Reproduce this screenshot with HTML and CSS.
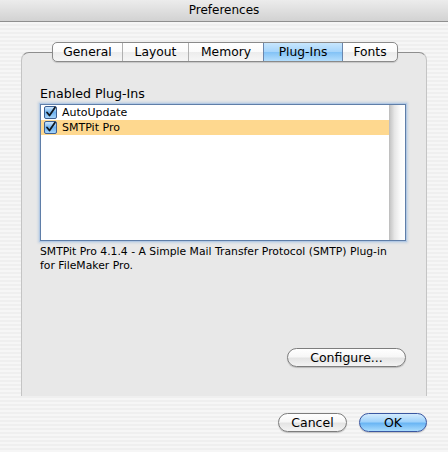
FILE: index.html
```html
<!DOCTYPE html>
<html>
<head>
<meta charset="utf-8">
<link rel="stylesheet" href="styles.css">
</head>
<body>
<div class="window">
  <div class="titlebar">Preferences</div>
  <div class="content">
    <div class="tabs">
      <div class="tab t-general">General</div>
      <div class="tab t-layout">Layout</div>
      <div class="tab t-memory">Memory</div>
      <div class="tab t-plugins selected">Plug-Ins</div>
      <div class="tab t-fonts">Fonts</div>
    </div>
    <div class="panel">
      <div class="label">Enabled Plug-Ins</div>
      <div class="listbox">
        <div class="rows">
          <div class="row">
            <svg class="check" width="13" height="13" viewBox="0 0 13 13"><defs><linearGradient id="cb1" x1="0" y1="0" x2="0" y2="1"><stop offset="0" stop-color="#d6ecff"/><stop offset="0.5" stop-color="#6fb2ef"/><stop offset="1" stop-color="#a9d6fb"/></linearGradient></defs><rect x="0.5" y="0.5" width="12" height="12" rx="1.5" fill="url(#cb1)" stroke="#3c5f92"/><path d="M3 6.5 L5.5 9.5 L11 1.5" fill="none" stroke="#101820" stroke-width="1.8" stroke-linecap="round" stroke-linejoin="round"/></svg>
            <span>AutoUpdate</span>
          </div>
          <div class="row hl">
            <svg class="check" width="13" height="13" viewBox="0 0 13 13"><defs><linearGradient id="cb2" x1="0" y1="0" x2="0" y2="1"><stop offset="0" stop-color="#d6ecff"/><stop offset="0.5" stop-color="#6fb2ef"/><stop offset="1" stop-color="#a9d6fb"/></linearGradient></defs><rect x="0.5" y="0.5" width="12" height="12" rx="1.5" fill="url(#cb2)" stroke="#3c5f92"/><path d="M3 6.5 L5.5 9.5 L11 1.5" fill="none" stroke="#101820" stroke-width="1.8" stroke-linecap="round" stroke-linejoin="round"/></svg>
            <span>SMTPit Pro</span>
          </div>
        </div>
        <div class="scrollbar"></div>
      </div>
      <div class="desc">SMTPit Pro 4.1.4 - A Simple Mail Transfer Protocol (SMTP) Plug-in<br>for FileMaker Pro.</div>
      <div class="configure-row">
        <div class="btn configure">Configure...</div>
      </div>
    </div>
    <div class="buttons">
      <div class="btn cancel">Cancel</div>
      <div class="btn ok">OK</div>
    </div>
  </div>
</div>
</body>
</html>
```

FILE: styles.css
```css
html, body {
  margin: 0;
  padding: 0;
}
body {
  width: 448px;
  height: 452px;
  overflow: hidden;
  font-family: "DejaVu Sans", "Liberation Sans", sans-serif;
  color: #000;
}
.window {
  width: 448px;
  height: 452px;
  background: repeating-linear-gradient(to bottom, #efefef 0px, #efefef 2px, #f6f6f6 2px, #f6f6f6 4px);
}
.titlebar {
  height: 21px;
  line-height: 21px;
  text-align: center;
  font-size: 12px;
  background: linear-gradient(to bottom, #ececec, #d2d2d2);
  border-bottom: 1px solid #8f8f8f;
}
.content {
  padding-top: 20px;
}
.tabs {
  position: relative;
  z-index: 1;
  display: flex;
  width: 346px;
  height: 20px;
  margin-left: 52px;
  box-sizing: border-box;
  border: 1px solid #8a8a8a;
  border-radius: 5px;
  overflow: hidden;
  background: linear-gradient(to bottom, #ffffff 0%, #fbfbfb 50%, #ececec 51%, #f6f6f6 100%);
  box-shadow: 0 1px 1px rgba(0,0,0,0.15);
}
.tab {
  height: 18px;
  line-height: 18px;
  font-size: 12.3px;
  text-align: center;
  border-right: 1px solid #b0b0b0;
  box-sizing: border-box;
}
.t-general { width: 70px; }
.t-layout { width: 66px; }
.t-memory { width: 75px; }
.t-plugins { width: 79px; }
.t-fonts { width: 54px; border-right: none; }
.tab.selected {
  background: linear-gradient(to bottom, #c7e6fd 0%, #a5d4fb 50%, #82c2f6 51%, #b4defd 100%);
  border-right: 1px solid #6a86ad;
  border-left: 1px solid #6a86ad;
  margin-left: -1px;
  width: 80px;
}
.panel {
  margin: -10px 21px 0 21px;
  height: 344px;
  box-sizing: border-box;
  background: #e8e8e8;
  border-top: 1px solid #8e8e8e;
  border-left: 1px solid #c4c4c4;
  border-right: 1px solid #c4c4c4;
  border-radius: 8px 8px 0 0;
  padding: 33px 20px 29px 18px;
  display: flex;
  flex-direction: column;
}
.label {
  font-size: 12.6px;
  line-height: 15px;
  height: 15px;
}
.listbox {
  margin-top: 3px;
  height: 137px;
  box-sizing: border-box;
  border: 1px solid #5f7ea8;
  box-shadow: 0 0 0 1px #b3c9e4, 0 0 2px 2px rgba(130,170,215,0.35);
  background: #fff;
  display: flex;
}
.rows {
  flex: 1;
}
.row {
  height: 15px;
  display: flex;
  align-items: center;
  font-size: 11px;
  padding-left: 3px;
}
.row.hl {
  background: #fed88f;
}
.check {
  display: block;
  margin-right: 5px;
  flex: none;
}
.scrollbar {
  width: 15px;
  background: linear-gradient(to right, #c6c6c6 0%, #e6e6e6 30%, #fbfbfb 70%, #ffffff 100%);
  border-left: 1px solid #c0c0c0;
}
.desc {
  margin-top: 4px;
  font-size: 10.8px;
  line-height: 14px;
}
.configure-row {
  margin-top: auto;
  display: flex;
  justify-content: flex-end;
}
.btn {
  height: 19px;
  line-height: 17px;
  box-sizing: border-box;
  border: 1px solid #7d7d7d;
  border-radius: 10px;
  text-align: center;
  font-size: 12.5px;
  background: linear-gradient(to bottom, #ffffff 0%, #f7f7f7 45%, #e4e4e4 55%, #f4f4f4 100%);
  box-shadow: 0 1px 1px rgba(0,0,0,0.2);
}
.configure {
  width: 119px;
}
.buttons {
  display: flex;
  justify-content: flex-end;
  gap: 12px;
  margin-top: 17px;
  padding-right: 21px;
}
.cancel {
  width: 69px;
}
.ok {
  width: 68px;
  border-color: #3a57a1;
  background: linear-gradient(to bottom, #d3ebfd 0%, #9fd2fb 45%, #6bb6f4 55%, #a9dcfd 100%);
}
```
